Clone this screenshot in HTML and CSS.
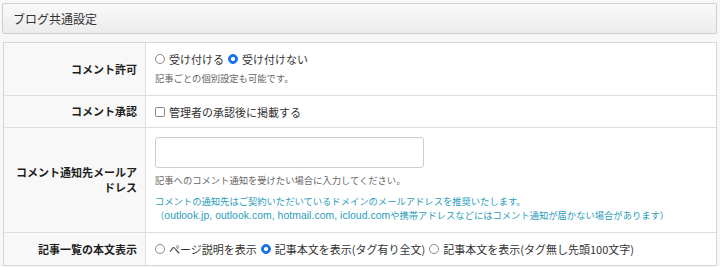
FILE: index.html
```html
<!DOCTYPE html>
<html lang="ja">
<head>
<meta charset="utf-8">
<title>ブログ共通設定</title>
<link rel="stylesheet" href="styles.css">
</head>
<body>
<div class="page">
  <div class="panel-head">ブログ共通設定</div>
  <div class="table-wrap">
    <table class="settings">
      <tr class="r1">
        <th>コメント許可</th>
        <td>
          <div class="line">
            <label class="opt"><span class="radio"></span>受け付ける</label>
            <label class="opt"><span class="radio on"></span>受け付けない</label>
          </div>
          <p class="note">記事ごとの個別設定も可能です。</p>
        </td>
      </tr>
      <tr class="r2">
        <th>コメント承認</th>
        <td>
          <div class="line">
            <label class="opt"><span class="check"></span>管理者の承認後に掲載する</label>
          </div>
        </td>
      </tr>
      <tr class="r3">
        <th>コメント通知先メールアドレス</th>
        <td>
          <div class="input"></div>
          <p class="note gray">記事へのコメント通知を受けたい場合に入力してください。</p>
          <p class="note blue first">コメントの通知先はご契約いただいているドメインのメールアドレスを推奨いたします。</p>
          <p class="note blue">（<span class="latin">outlook.jp, outlook.com, hotmail.com, icloud.com</span>や携帯アドレスなどにはコメント通知が届かない場合があります）</p>
        </td>
      </tr>
      <tr class="r4">
        <th>記事一覧の本文表示</th>
        <td>
          <div class="line">
            <label class="opt"><span class="radio"></span>ページ説明を表示</label>
            <label class="opt"><span class="radio on"></span>記事本文を表示(タグ有り全文)</label>
            <label class="opt"><span class="radio"></span>記事本文を表示(タグ無し先頭100文字)</label>
          </div>
        </td>
      </tr>
    </table>
  </div>
</div>
</body>
</html>
```

FILE: styles.css
```css
html, body {
  margin: 0;
  padding: 0;
  background: #f7f7f7;
}
body {
  font-family: "Noto Sans CJK JP", sans-serif;
  color: #333;
}
.page {
  padding: 3px 3px 0 2px;
}
.panel-head {
  height: 29px;
  line-height: 29px;
  border: 1px solid #cfcfcf;
  border-radius: 2px;
  background: linear-gradient(#f9f9f9, #ececec);
  font-size: 12px;
  padding-left: 10px;
  color: #333;
}
.table-wrap {
  margin: 8px 0 0 1px;
  border: 1px solid #d6d6d6;
  background: #fff;
}
.settings {
  width: 100%;
  border-collapse: collapse;
}
.settings th,
.settings td {
  border: 1px solid #dedede;
}
.settings tr:first-child th,
.settings tr:first-child td { border-top: 0; }
.settings tr:last-child th,
.settings tr:last-child td { border-bottom: 0; }
.settings th { border-left: 0; }
.settings td { border-right: 0; }
.settings th {
  width: 121px;
  padding: 0 8px 0 12px;
  background: #f8f8f8;
  text-align: right;
  font-size: 11px;
  font-weight: bold;
  line-height: 15px;
  vertical-align: middle;
  color: #1e1e1e;
}
.settings td {
  background: #fff;
  padding: 8px 8px 10px 9px;
  vertical-align: top;
  font-size: 11px;
}
.r2 td { padding: 8px 8px 7px 9px; }
.r3 td { padding: 9px 8px 9px 9px; }
.r4 td { padding: 8px 8px 8px 9px; }
.line {
  height: 16px;
  line-height: 16px;
  display: flex;
  align-items: center;
}
.opt {
  display: inline-flex;
  align-items: center;
  margin-right: 4px;
  color: #333;
  white-space: nowrap;
}
.radio {
  width: 8px;
  height: 8px;
  border: 1px solid #8a8a8a;
  border-radius: 50%;
  margin-right: 4px;
  background: #fff;
  box-sizing: content-box;
}
.radio.on {
  border-color: #1a73e8;
  background: radial-gradient(circle, #fff 0 1.8px, #1a73e8 2.3px);
}
.check {
  width: 8px;
  height: 8px;
  border: 1px solid #8a8a8a;
  border-radius: 2px;
  margin-right: 4px;
  background: #fff;
}
.note {
  margin: 4px 0 0;
  font-size: 9.3px;
  line-height: 14px;
  color: #666;
  white-space: nowrap;
}
.latin {
  font-family: "Liberation Sans", sans-serif;
  font-size: 10.4px;
  letter-spacing: 0.05px;
}
.input {
  width: 267px;
  height: 29px;
  border: 1px solid #cdcdcd;
  border-radius: 3px;
  background: #fff;
}
.note.gray { margin-top: 5px; }
.note.blue { color: #2a9cbb; margin-top: 0; }
.note.blue.first { margin-top: 7px; }
```
